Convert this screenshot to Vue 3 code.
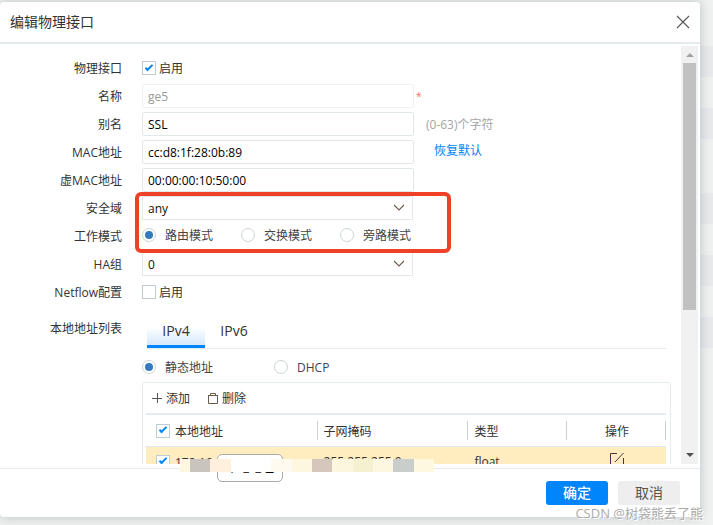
<script setup>
import { ref } from 'vue'

const enabled = ref(true)
const name = ref('ge5')
const alias = ref('SSL')
const mac = ref('cc:d8:1f:28:0b:89')
const virtualMac = ref('00:00:00:10:50:00')
const zone = ref('any')
const mode = ref('route')
const haGroup = ref('0')
const netflow = ref(false)
const tab = ref('IPv4')
const addressMode = ref('static')
const allSelected = ref(true)
const rows = ref([{ selected: true, address: '172.16', mask: '255.255.255.0', type: 'float' }])

const modes = [
  { value: 'route', label: '路由模式' },
  { value: 'switch', label: '交换模式' },
  { value: 'bypass', label: '旁路模式' }
]
const mosaic = [
  '#fdf6e0', '#c9c4bc', '#c9c4bc', '#ffefdd', '#ffefdd', '#ffffff', '#ffffff', '#ffffff', '#ffffff',
  '#fffaf0', '#fffaf0', '#fef7df', '#fef7df', '#d5c7bc', '#d5c7bc', '#fdf6df', '#fdf6df', '#f5f0cf',
  '#f5f0cf', '#fdf7e1', '#fdf7e1', '#c9cecd', '#c9cecd', '#fef8e0', '#fef8e0'
]
</script>

<template>
  <div class="page">
    <section class="modal" role="dialog" aria-labelledby="dialog-title">
      <header class="modal-header">
        <h1 id="dialog-title">编辑物理接口</h1>
        <button class="close" type="button" aria-label="关闭">
          <svg width="14" height="14" viewBox="0 0 14 14"><path d="M1 1L13 13M13 1L1 13" fill="none" stroke="#555" stroke-width="1.1" /></svg>
        </button>
      </header>

      <div class="modal-body">
        <form class="form" @submit.prevent>
          <div class="row">
            <span class="label">物理接口</span>
            <label class="check"><input v-model="enabled" type="checkbox" /><span>启用</span></label>
          </div>
          <div class="row">
            <label class="label" for="name">名称</label>
            <input id="name" v-model="name" class="field" type="text" disabled />
            <span class="required">*</span>
          </div>
          <div class="row">
            <label class="label" for="alias">别名</label>
            <input id="alias" v-model="alias" class="field" type="text" />
            <span class="hint">(0-63)个字符</span>
          </div>
          <div class="row">
            <label class="label" for="mac">MAC地址</label>
            <input id="mac" v-model="mac" class="field" type="text" />
            <a class="restore" href="#">恢复默认</a>
          </div>
          <div class="row">
            <label class="label" for="vmac">虚MAC地址</label>
            <input id="vmac" v-model="virtualMac" class="field" type="text" />
          </div>
          <div class="row">
            <label class="label" for="zone">安全域</label>
            <span class="select">
              <select id="zone" v-model="zone"><option>any</option></select>
              <svg width="12" height="8" viewBox="0 0 12 8"><path d="M1 1L6 6L11 1" fill="none" stroke="#6b5a52" stroke-width="1.1" /></svg>
            </span>
          </div>
          <div class="row">
            <span class="label">工作模式</span>
            <div class="modes">
              <label v-for="m in modes" :key="m.value" class="radio">
                <input v-model="mode" type="radio" name="mode" :value="m.value" /><span>{{ m.label }}</span>
              </label>
            </div>
          </div>
          <div class="row">
            <label class="label" for="ha">HA组</label>
            <span class="select">
              <select id="ha" v-model="haGroup"><option>0</option></select>
              <svg width="12" height="8" viewBox="0 0 12 8"><path d="M1 1L6 6L11 1" fill="none" stroke="#6b5a52" stroke-width="1.1" /></svg>
            </span>
          </div>
          <div class="row">
            <span class="label">Netflow配置</span>
            <label class="check"><input v-model="netflow" type="checkbox" /><span>启用</span></label>
          </div>

          <div class="row list-row">
            <span class="label">本地地址列表</span>
            <div class="addresses">
              <div class="tabs" role="tablist">
                <button
                  v-for="t in ['IPv4', 'IPv6']"
                  :key="t"
                  class="tab"
                  :class="{ active: tab === t }"
                  type="button"
                  role="tab"
                  :aria-selected="tab === t"
                  @click="tab = t"
                >{{ t }}</button>
              </div>
              <div class="sources">
                <label class="radio"><input v-model="addressMode" type="radio" name="source" value="static" /><span>静态地址</span></label>
                <label class="radio"><input v-model="addressMode" type="radio" name="source" value="dhcp" /><span>DHCP</span></label>
              </div>
              <div class="panel">
                <div class="toolbar">
                  <button type="button">
                    <svg width="10" height="10" viewBox="0 0 10 10"><path d="M0 5.5H10M5.5 0V10" fill="none" stroke="#555" /></svg><span>添加</span>
                  </button>
                  <button type="button">
                    <svg width="10" height="11" viewBox="0 0 10 11"><path d="M0 2.5H10M.5 2.5V10.5H9.5V2.5M2.5 2.5V.5H7.5V2.5" fill="none" stroke="#6b5a4a" /></svg><span>删除</span>
                  </button>
                </div>
                <table>
                  <colgroup>
                    <col class="c-address" /><col class="c-mask" /><col class="c-type" /><col class="c-action" />
                  </colgroup>
                  <thead>
                    <tr>
                      <th><label class="check"><input v-model="allSelected" type="checkbox" /><span>本地地址</span></label></th>
                      <th>子网掩码</th>
                      <th>类型</th>
                      <th class="action">操作</th>
                    </tr>
                  </thead>
                  <tbody>
                    <tr v-for="r in rows" :key="r.address">
                      <td><label class="check"><input v-model="r.selected" type="checkbox" /><span>{{ r.address }}</span></label></td>
                      <td>{{ r.mask }}</td>
                      <td>{{ r.type }}</td>
                      <td class="action">
                        <button class="edit" type="button" aria-label="编辑">
                          <svg width="16" height="16" viewBox="0 0 16 16"><path d="M8 1.5H1.5V14.5H14.5V6M14.5 1L6 10" fill="none" stroke="#4d3045" /></svg>
                        </button>
                      </td>
                    </tr>
                  </tbody>
                </table>
              </div>
            </div>
          </div>
        </form>

        <div class="scrollbar" aria-hidden="true">
          <i class="arrow up"></i>
          <i class="thumb"></i>
          <i class="arrow down"></i>
        </div>
        <div class="highlight" aria-hidden="true"></div>
      </div>

      <footer class="modal-footer">
        <button class="btn primary" type="button">确定</button>
        <button class="btn" type="button">取消</button>
        <div class="tooltip" role="tooltip">本地地址</div>
        <div class="mosaic" aria-hidden="true">
          <i v-for="(c, i) in mosaic" :key="i" :style="{ background: c }"></i>
        </div>
      </footer>
    </section>
    <div class="watermark">CSDN @树袋熊丢了熊</div>
  </div>
</template>

<style>
body {
  margin: 0;
}
</style>

<style scoped>
* {
  box-sizing: border-box;
}
.page {
  position: relative;
  height: 100vh;
  min-height: 400px;
  padding: 2px 13px 8px 0;
  overflow: hidden;
  font: 12px/16px "Open Sans", "Noto Sans CJK SC", sans-serif;
  color: #333;
  background:
    linear-gradient(#e8eaec, #e8eaec) right 46px / 100% 31px no-repeat,
    linear-gradient(#e8eaec, #e8eaec) right 108px / 100% 31px no-repeat,
    linear-gradient(#e8eaec, #e8eaec) right 193px / 100% 31px no-repeat,
    linear-gradient(#e8eaec, #e8eaec) right 255px / 100% 31px no-repeat,
    linear-gradient(#e8eaec, #e8eaec) right 317px / 100% 31px no-repeat,
    #f0f1f1;
}
button,
input,
select {
  font: inherit;
  color: inherit;
}
button {
  padding: 0;
  border: 0;
  background: none;
}
.modal {
  display: flex;
  flex-direction: column;
  height: 100%;
  border-radius: 4px;
  background: #fff;
  box-shadow: 0 0 12px rgba(90, 105, 105, 0.35);
}
.modal-header {
  display: flex;
  flex: none;
  align-items: center;
  justify-content: space-between;
  height: 42px;
  padding: 0 10px;
  border-bottom: 2px solid #e4ebee;
}
h1 {
  margin: 0;
  font-size: 14px;
  font-weight: 400;
}
.close {
  display: flex;
}
.modal-body {
  position: relative;
  display: flex;
  flex: 1;
  min-height: 0;
  padding: 2px 2px 0 0;
  margin-bottom: 4px;
  overflow: hidden;
}
.form {
  flex: 1;
  min-width: 0;
  padding: 8px 10px 0 0;
}
.row {
  display: flex;
  align-items: center;
  height: 28px;
}
.label {
  flex: none;
  width: 122px;
  margin-right: 20px;
  padding-top: 2px;
  text-align: right;
  white-space: nowrap;
}
.field,
.select {
  flex: none;
  width: 272px;
  height: 24px;
  border: 1px solid #e1e8eb;
  border-radius: 2px;
  background: #fff;
}
.field {
  padding: 0 5px;
  color: #000;
}
.field:disabled {
  border-color: #edf2f3;
  color: #999;
}
.select {
  position: relative;
  width: 271px;
  border-radius: 0;
}
.select select {
  display: block;
  width: 100%;
  height: 22px;
  padding: 2px 5px 0;
  border: 0;
  appearance: none;
  background: none;
  color: #111;
}
.select svg {
  position: absolute;
  top: 7px;
  right: 7px;
  pointer-events: none;
}
.required {
  margin-left: 2px;
  color: #ff6b6b;
  font-size: 10px;
}
.hint {
  margin-left: 12px;
  padding-top: 2px;
  color: #a5a5a5;
}
.restore {
  margin-left: 20px;
  padding-bottom: 2px;
  color: #0085fa;
  text-decoration: none;
}
.check {
  display: flex;
  align-items: center;
  gap: 3px;
  white-space: nowrap;
}
.check span,
.radio span,
.toolbar span {
  padding-top: 2px;
}
.check input {
  flex: none;
  display: grid;
  place-items: center;
  width: 14px;
  height: 14px;
  margin: 0;
  border: 1px solid #bfccd4;
  appearance: none;
  background: #fff;
}
.check input:checked::before {
  content: "";
  width: 8px;
  height: 4px;
  margin-bottom: 3px;
  border: solid #0085fa;
  border-width: 0 0 2px 2px;
  box-sizing: border-box;
  transform: rotate(-45deg);
}
.radio {
  display: flex;
  align-items: center;
  gap: 9px;
  color: #444;
}
.radio input {
  flex: none;
  display: grid;
  place-items: center;
  width: 14px;
  height: 14px;
  margin: 0;
  border: 1px solid #cdd5d9;
  border-radius: 50%;
  appearance: none;
  background: #fff;
}
.radio input:checked::before {
  content: "";
  width: 8px;
  height: 8px;
  border-radius: 50%;
  background: #337bc0;
}
.modes {
  display: flex;
  gap: 28px;
  padding-bottom: 2px;
}
.list-row {
  align-items: flex-start;
  height: auto;
  padding-top: 9px;
}
.list-row > .label {
  padding-top: 6px;
}
.addresses {
  flex: 1;
  min-width: 0;
}
.tabs {
  display: flex;
  margin: 0 5px;
  border-bottom: 1px solid #e4ebee;
}
.tab {
  width: 58px;
  height: 33px;
  padding-top: 2px;
  border-bottom: 3px solid transparent;
  font-size: 14px;
}
.tab.active {
  border-bottom-color: #0085fa;
  background: linear-gradient(#fff 40%, #d5e8fa);
}
.sources {
  display: flex;
  gap: 61px;
  height: 33px;
  padding-top: 3px;
}
.panel {
  padding: 0 4px 0 3px;
  border: 1px solid #e4ebee;
  border-radius: 3px;
}
.toolbar {
  display: flex;
  gap: 18px;
  height: 32px;
  padding-left: 6px;
  border-bottom: 2px solid #e4ebee;
}
.toolbar button {
  display: flex;
  align-items: center;
  gap: 4px;
}
table {
  width: 100%;
  table-layout: fixed;
  border-collapse: separate;
  border-spacing: 0;
}
.c-address {
  width: 33%;
}
.c-mask {
  width: 29%;
}
.c-type {
  width: 19%;
}
.c-action {
  width: 19%;
}
th,
td {
  height: 29px;
  padding: 0 5px 0 6px;
  font-weight: 400;
  text-align: left;
}
th {
  height: 32px;
  padding-top: 2px;
  border-bottom: 1px solid #dfe9f2;
  background: linear-gradient(#c8d0d4, #c8d0d4) right center / 1px 19px no-repeat;
}
th:first-child {
  padding-top: 0;
}
th:first-child,
td:first-child {
  padding-left: 10px;
}
td {
  background: #ffedc0;
}
table .check {
  gap: 5px;
}
th.action,
td.action {
  text-align: center;
}
.edit svg {
  display: block;
}
.scrollbar {
  display: flex;
  flex: none;
  flex-direction: column;
  align-items: center;
  width: 17px;
  background: #f1f1f1;
}
.arrow {
  width: 0;
  height: 0;
  border: 4px solid transparent;
}
.arrow.up {
  margin: 3px 0 6px;
  border-bottom-color: #a3a3a3;
}
.arrow.down {
  margin: auto 0 3px;
  border-top-color: #505050;
}
.thumb {
  width: 13px;
  height: 59%;
  background: #c1c1c1;
}
.highlight {
  position: absolute;
  top: 148px;
  left: 135px;
  width: 316px;
  height: 61px;
  border: 4px solid #ef4127;
  border-radius: 6px;
  pointer-events: none;
}
.modal-footer {
  position: relative;
  display: flex;
  flex: none;
  align-items: center;
  justify-content: flex-end;
  gap: 10px;
  height: 49px;
  padding: 0 20px 0 0;
  border-top: 1px solid #e4ebee;
}
.btn {
  width: 62px;
  height: 24px;
  border-radius: 3px;
  background: #eee;
  color: #555;
  font-size: 14px;
}
.btn.primary {
  background: #0085fa;
  color: #fff;
  font-weight: 500;
}
.tooltip {
  position: absolute;
  top: -15px;
  left: 217px;
  width: 66px;
  height: 28px;
  border: 1px solid #aaa;
  border-radius: 5px;
  background: #fff;
  color: #000;
  line-height: 26px;
  text-align: center;
}
.mosaic {
  position: absolute;
  top: -10px;
  left: 180px;
  display: flex;
  width: 254px;
  height: 13px;
}
.mosaic i {
  flex: 1;
}
.watermark {
  position: absolute;
  right: 10px;
  bottom: 3px;
  color: #aaa;
  font-size: 13px;
  line-height: 18px;
  text-shadow: 1px 1px 0 #fff;
}
</style>
